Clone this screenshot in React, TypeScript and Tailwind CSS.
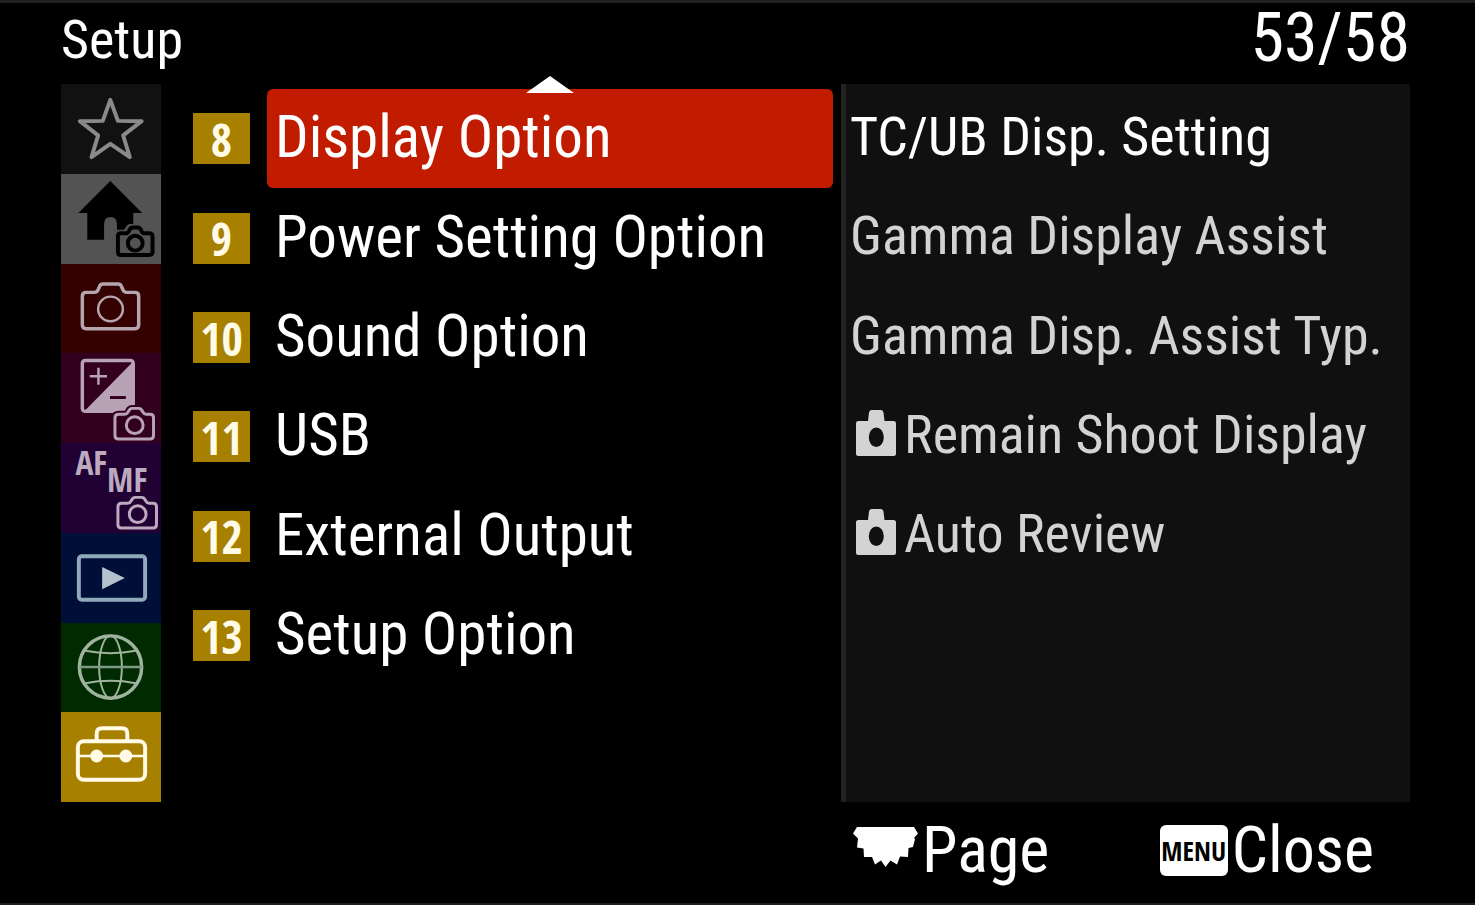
import type { ReactNode } from "react";

type Tab = { label: string; tile: string; icon: ReactNode };

function TileIcon({ children, className }: { children: ReactNode; className: string }) {
  return (
    <svg viewBox="0 0 100 90" aria-hidden="true" className={`h-[89px] w-full overflow-visible ${className}`} fill="none" stroke="currentColor" strokeLinejoin="round">
      {children}
    </svg>
  );
}

/* Small camera in the lower right corner of a tile; the fill hides what lies under it. */
function CornerCamera({ x, back }: { x: number; back: string }) {
  const body = "M4 6H10Q12 6 13 4L14 2.500Q15 0 17.500 0H24Q26.500 0 27.500 2.500L28.500 4Q29.500 6 31.500 6H35.500Q39 6 39 9.500V27.500Q39 31 35.500 31H3.500Q0 31 0 27.500V9.500Q0 6 4 6Z";
  return (
    <g transform={`translate(${x} 55)`}>
      <path d={body} fill={back} stroke={back} strokeWidth="7" />
      <path d={body} strokeWidth="3" />
      <circle cx="20" cy="17" r="8.500" strokeWidth="3" />
    </g>
  );
}

const tabs: Tab[] = [
  {
    label: "My Menu",
    tile: "bg-[#111111]",
    icon: (
      <TileIcon className="text-[#8a8a8a]">
        <path strokeWidth="4" d="M49.300 16L57 37.300L81 37.600L62.300 52L69 74L49.300 60.500L30.300 74L37 52L18.500 37.600L41.700 37.300Z" />
      </TileIcon>
    ),
  },
  {
    label: "Main",
    tile: "bg-[#535353]",
    icon: (
      <TileIcon className="text-black">
        <path fill="currentColor" stroke="none" d="M49.300 7L81.500 39.500H72.500V66H56V51Q56 43.500 49.500 43.500Q43 43.500 43 51V66.500H26V39.500H17Z" />
        <g transform="translate(56 54)">
          <path fill="#535353" stroke="#535353" strokeWidth="7" d="M3 6H9L13 0H23L27 6H36V28H0V6Z" />
          <path strokeWidth="4" d="M4 6H9Q11 6 12 4L13 2Q14 0 16 0H21Q23 0 24 2L25 4Q26 6 28 6H32Q36 6 36 9V25Q36 28 32 28H4Q1 28 1 25V9Q1 6 4 6Z" />
          <circle cx="18.500" cy="16" r="7.500" strokeWidth="4" />
        </g>
      </TileIcon>
    ),
  },
  {
    label: "Shooting",
    tile: "bg-[#340000]",
    icon: (
      <TileIcon className="text-[#b5a5ad]">
        <path strokeWidth="3.500" d="M25 28.700H33Q36 28.700 37 26L38.500 22.500Q39.500 20.300 42 20.300H57Q59.500 20.300 60.500 22.500L62 26Q63 28.700 66 28.700H74Q78 28.700 78 32.500V61.500Q78 65.500 74 65.500H25Q21 65.500 21 61.500V32.500Q21 28.700 25 28.700Z" />
        <circle cx="49.500" cy="45.500" r="12.500" strokeWidth="2.500" />
      </TileIcon>
    ),
  },
  {
    label: "Exposure/Color",
    tile: "bg-[#32001e]",
    icon: (
      <TileIcon className="text-[#b8a3b6]">
        <path fill="currentColor" stroke="none" d="M72 8V58H23Z" />
        <rect x="21" y="6.500" width="51.500" height="51.500" rx="3" strokeWidth="3.500" />
        <path strokeWidth="2.500" d="M28.500 22.500H46M37.300 14V31" />
        <path stroke="#32001e" strokeWidth="3" d="M49 44H65" />
        <CornerCamera x={54} back="#32001e" />
      </TileIcon>
    ),
  },
  {
    label: "Focus",
    tile: "bg-[#210033]",
    icon: (
      <TileIcon className="text-[#bcaabf]">
        <CornerCamera x={57} back="#210033" />
        <g fill="currentColor" stroke="none" className="font-['Open_Sans_Condensed','Roboto_Condensed',sans-serif] text-[34px] font-bold">
          <text x="14" y="32">AF</text>
          <text x="46" y="50">MF</text>
        </g>
      </TileIcon>
    ),
  },
  {
    label: "Playback",
    tile: "bg-[#000f38]",
    icon: (
      <TileIcon className="text-[#8fa9ba]">
        <rect x="17.500" y="23.500" width="67" height="44" rx="3" strokeWidth="4" />
        <path fill="#b4c2cc" stroke="none" d="M41 34.500L64 45.500L41 57Z" />
      </TileIcon>
    ),
  },
  {
    label: "Network",
    tile: "bg-[#002b00]",
    icon: (
      <TileIcon className="text-[#9fb39f]">
        <circle cx="49.500" cy="44.500" r="31.500" strokeWidth="3.500" />
        <ellipse cx="49.500" cy="44.500" rx="11.500" ry="31.500" strokeWidth="2" />
        <path strokeWidth="2" d="M24 28Q49.500 33 75 28M24 61Q49.500 56 75 61" />
        <path strokeWidth="2.500" stroke="#7f9a83" d="M18 44.500H81" />
      </TileIcon>
    ),
  },
  {
    label: "Setup",
    tile: "bg-[#a88000]",
    icon: (
      <TileIcon className="text-[#fffbe6]">
        <rect x="16.500" y="28.500" width="68" height="39" rx="6" strokeWidth="4" />
        <path strokeWidth="4" d="M35.500 28V21Q35.500 15.500 41 15.500H61Q66.500 15.500 66.500 21V28" />
        <path strokeWidth="2.500" d="M17 43.500H84" />
        <circle cx="35.500" cy="43.500" r="6.500" fill="currentColor" stroke="none" />
        <circle cx="65" cy="43.500" r="6.500" fill="currentColor" stroke="none" />
      </TileIcon>
    ),
  },
];

const groups = [
  { number: 8, name: "Display Option" },
  { number: 9, name: "Power Setting Option" },
  { number: 10, name: "Sound Option" },
  { number: 11, name: "USB" },
  { number: 12, name: "External Output" },
  { number: 13, name: "Setup Option" },
];

const settings = [
  { name: "TC/UB Disp. Setting", photo: false, enabled: true },
  { name: "Gamma Display Assist", photo: false, enabled: false },
  { name: "Gamma Disp. Assist Typ.", photo: false, enabled: false },
  { name: "Remain Shoot Display", photo: true, enabled: false },
  { name: "Auto Review", photo: true, enabled: false },
];

function PhotoIcon() {
  return (
    <svg viewBox="0 0 40 46" aria-hidden="true" className="mr-2 mb-1 ml-1.5 h-[46px] w-10 shrink-0" fill="currentColor">
      <path fillRule="evenodd" d="M2.500 11H12L13 2.500Q13.300 0 15.500 0H25Q27.200 0 27.500 2.500L28.500 11H37.500Q40 11 40 13.500V43.500Q40 46 37.500 46H2.500Q0 46 0 43.500V13.500Q0 11 2.500 11ZM20.300 17.500A7.500 9.800 0 1 0 20.300 37.100A7.500 9.800 0 1 0 20.300 17.500Z" />
    </svg>
  );
}

function DialIcon() {
  return (
    <svg viewBox="0 0 65 40" aria-hidden="true" className="mb-2 h-10 w-[65px] shrink-0" fill="currentColor">
      <path d="M4 0H61L65 6.500L61 11L62 12L60 20L55.500 21L55 30L47 29.500L44 37.500L37.500 33.500L32.500 40L28 33.500L22 37.500L19 30L11 30L10.500 21.500L4 20.500L5 11.500L0 6.500Z" />
    </svg>
  );
}

export default function App() {
  return (
    <div className="flex min-h-screen flex-col border-t-3 border-b-2 border-[#202020] bg-black pr-[65px] pl-[61px] font-['Roboto_Condensed','Liberation_Sans',sans-serif] whitespace-nowrap text-white">
      <header className="flex h-[81px] items-center justify-between pb-2">
        <h1 className="text-[54px] leading-none">Setup</h1>
        <p className="pb-1 text-[68px] leading-none">53/58</p>
      </header>

      <main className="grid flex-1 grid-cols-[100px_680fr_569fr]">
        <nav aria-label="Menu tabs" className="grid auto-rows-fr">
          {tabs.map((tab) => (
            <button key={tab.label} type="button" aria-label={tab.label} className={tab.tile}>
              {tab.icon}
            </button>
          ))}
        </nav>

        <ul className="grid grid-rows-7 pt-[5px] pr-2 pb-[17px] pl-8">
          {groups.map((group, index) => (
            <li key={group.number}>
              <button type="button" className="flex h-full w-full items-center gap-[17px] text-left">
                <span className="flex h-[51px] w-[57px] shrink-0 items-center justify-center bg-[#a88000] font-['Open_Sans_Condensed','Roboto_Condensed',sans-serif] text-[46px] leading-none font-bold text-[#fffbe6]">
                  {group.number}
                </span>
                <span className={`relative flex h-full flex-1 items-center rounded-md pb-1 pl-2 text-[59px] leading-none ${index === 0 ? "bg-[#c21c00]" : ""}`}>
                  {index === 0 && (
                    <svg viewBox="0 0 48 17" aria-hidden="true" className="absolute -top-[13px] left-1/2 h-[17px] w-12 -translate-x-1/2" fill="white">
                      <path d="M24 0L48 17H0Z" />
                    </svg>
                  )}
                  {group.name}
                </span>
              </button>
            </li>
          ))}
        </ul>

        <ul className="grid grid-rows-7 border-l-5 border-[#222222] bg-[#101010] pt-[5px] pb-[17px] pl-1">
          {settings.map((setting) => (
            <li key={setting.name}>
              <button type="button" className={`flex h-full w-full items-center pb-1 text-left text-[54px] leading-none ${setting.enabled ? "text-white" : "text-[#d3d3d3]"}`}>
                {setting.photo && <PhotoIcon />}
                {setting.name}
              </button>
            </li>
          ))}
        </ul>
      </main>

      <footer className="grid h-[101px] grid-cols-[100px_680fr_569fr] text-[64px] leading-none">
        <div className="col-start-3 flex items-center justify-between pr-9 pb-1 pl-3">
          <button type="button" className="flex items-center gap-1">
            <DialIcon />
            Page
          </button>
          <button type="button" className="flex items-center gap-1">
            <span className="flex h-[51px] w-[68px] items-center justify-center rounded-md bg-white font-['Open_Sans_Condensed','Roboto_Condensed',sans-serif] text-[27px] font-bold text-black">MENU</span>
            Close
          </button>
        </div>
      </footer>
    </div>
  );
}
